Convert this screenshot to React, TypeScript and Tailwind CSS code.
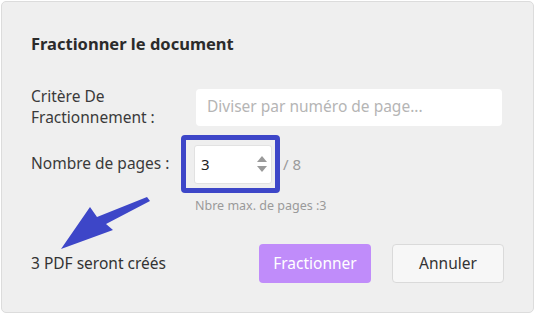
import React from 'react';

export default function App() {
  return (
    <div className="w-[535px] h-[314px] bg-white" style={{ fontFamily: '"Noto Sans", "Open Sans", sans-serif' }}>
      <div className="relative w-[533px] h-[312px] ml-px mt-px bg-[#efefef] border border-[#dcdcdc] rounded-[5px] px-[29px] text-[#333]">
        {/* titre */}
        <h1 className="pt-[30px] text-[16.5px] font-bold leading-[24px] text-[#2b2b2b]">Fractionner le document</h1>

        {/* critère */}
        <div className="flex items-center mt-[30px]">
          <div className="w-[165px] text-[15.5px] leading-[21px] text-[#3a3a3a]">
            Critère De<br />Fractionnement :
          </div>
          <div className="w-[306px] h-[37px] bg-white rounded-[4px] flex items-center px-[11px] text-[15.5px] text-[#b5b5b5]">
            Diviser par numéro de page...
          </div>
        </div>

        {/* nombre de pages */}
        <div className="flex items-center mt-[7px]">
          <div className="w-[150px] text-[15.5px] text-[#3a3a3a]">Nombre de pages :</div>
          <div className="w-[99px] h-[58px] border-[5px] border-[#3d46c8] rounded-[4px] flex items-center pl-[8px]">
            <div className="w-[78px] h-[39px] bg-white rounded-[3px] border border-[#e2e2e2] flex items-center justify-between pl-[6px] pr-[4px]">
              <span className="text-[15px] text-[#222]">3</span>
              <div className="flex flex-col gap-[4px]">
                <svg width="10" height="6" viewBox="0 0 10 6"><path d="M5 0L10 6H0Z" fill="#9a9a9a" /></svg>
                <svg width="10" height="6" viewBox="0 0 10 6"><path d="M0 0H10L5 6Z" fill="#9a9a9a" /></svg>
              </div>
            </div>
          </div>
          <span className="ml-[3px] text-[15px] text-[#9a9a9a]">/ 8</span>
        </div>
        <div className="ml-[164px] mt-[4px] text-[12.5px] text-[#9a9a9a]">Nbre max. de pages :3</div>

        {/* pied */}
        <div className="flex items-center mt-[28px]">
          <div className="flex-1 text-[15.5px] text-[#333]">3 PDF seront créés</div>
          <button className="w-[112px] h-[39px] rounded-[4px] bg-[#c08cfa] text-white text-[15.5px]">Fractionner</button>
          <button className="ml-[21px] w-[112px] h-[39px] rounded-[4px] bg-[#f7f7f7] border border-[#dadada] text-[15.5px] text-[#333]">Annuler</button>
        </div>

        {/* flèche */}
        <svg className="absolute left-0 top-0 pointer-events-none" width="535" height="314" viewBox="0 0 535 314">
          <polygon points="145,195 148,199 104,222 111,228 59,247 88,205 95,215" fill="#3d46c8" />
        </svg>
      </div>
    </div>
  );
}
